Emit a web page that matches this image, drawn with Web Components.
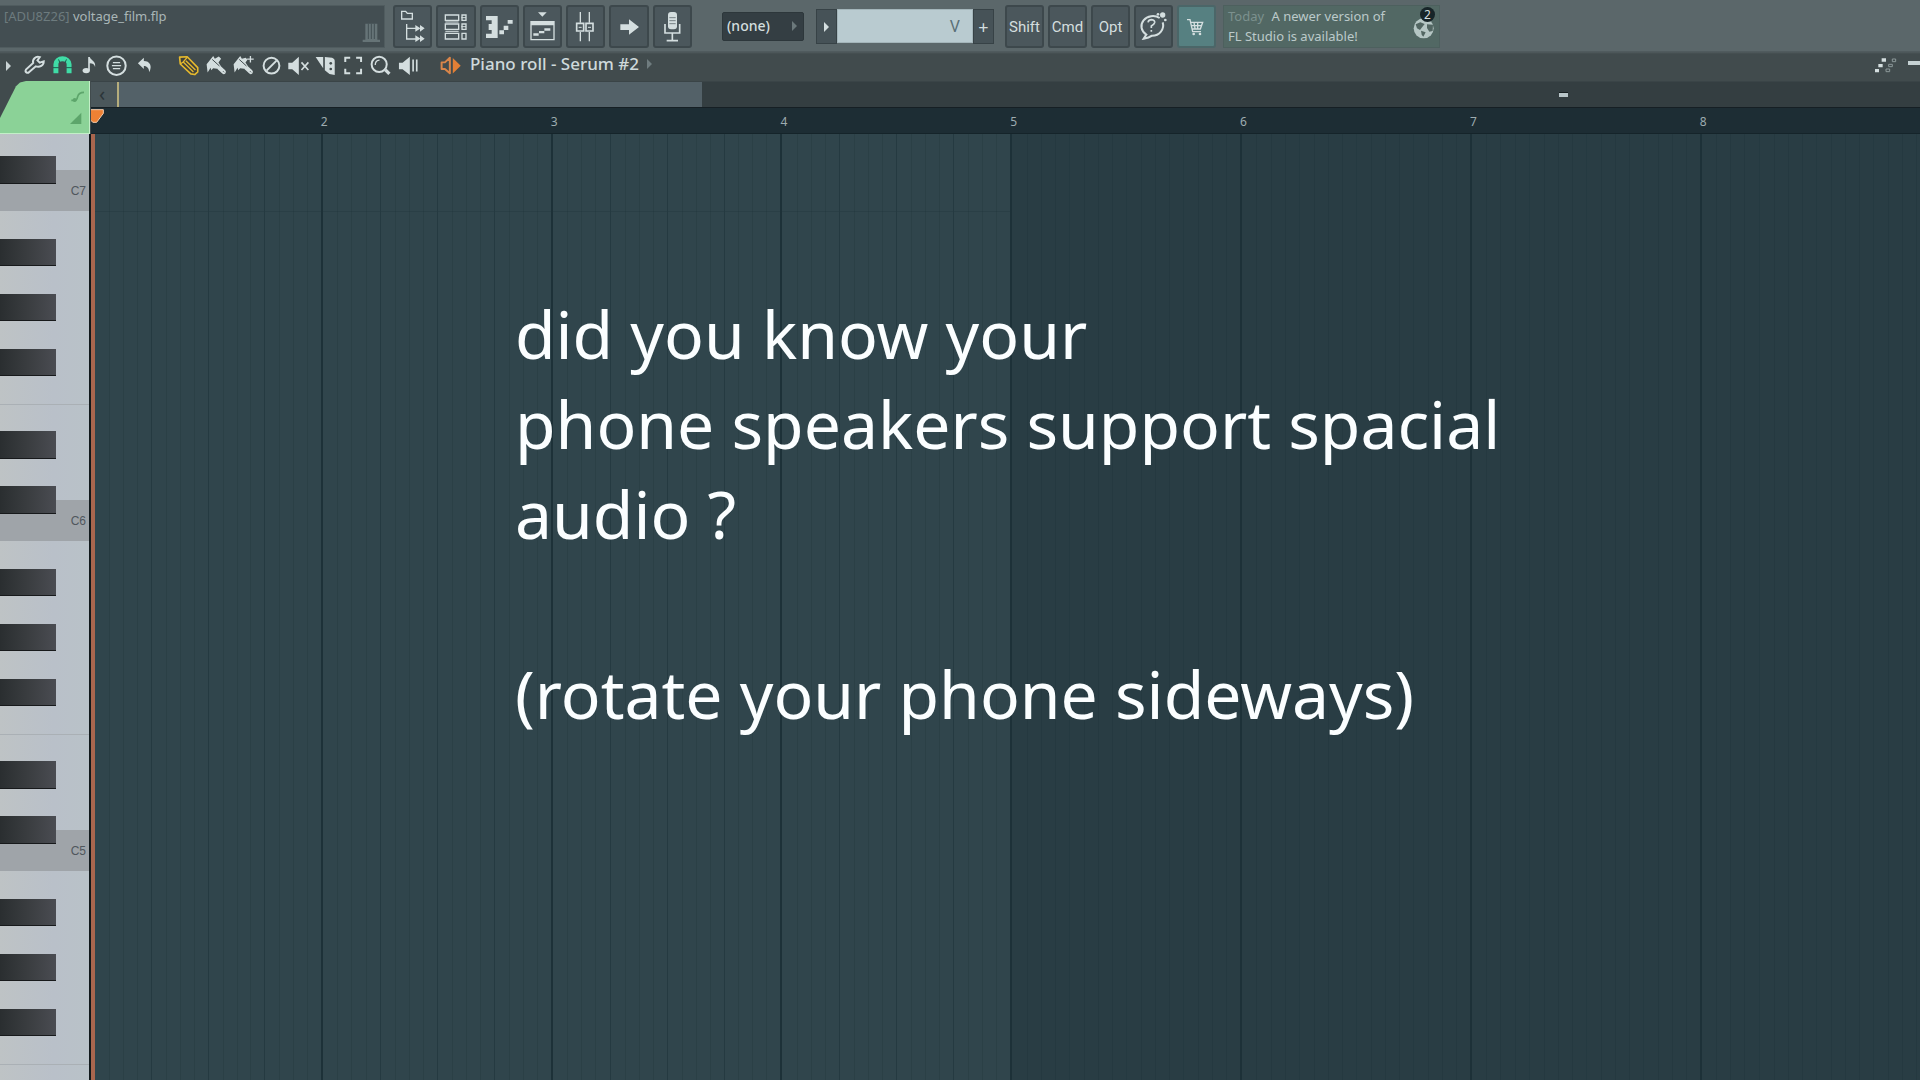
<!DOCTYPE html>
<html lang="en">
<head>
<meta charset="utf-8">
<title>Piano roll</title>
<style>
    body {
        margin: 0;
        height: 100vh;
        overflow: hidden;
        background: #30454c;
        font-family: "Noto Sans", "Open Sans", sans-serif;
    }
</style>
</head>
<body>
<studio-app></studio-app>

<script>
// icons are drawn at three units to the pixel, keyed by name: [viewBox, markup]
const ICONS = {
    browser: ["39 13 117 129", `
        <path class="line" stroke-width="4" d="M65 55V32H77L82 38H97V55Z"/>
        <path class="line" stroke-width="4" d="M80 70V115H112M80 83H110"/>
        <path d="M106 73L120 82V73L134 83L120 93V84L106 93ZM106 104L120 113V104L134 114L120 124V115L106 124Z"/>`],
    rack: ["169 13 117 129", `
        <path class="line" stroke-width="4" d="M197 43H237V59H197ZM197 70H237V86H197ZM197 98H237V115H197ZM247 43H259V59H247ZM247 70H259V86H247ZM247 98H259V115H247Z"/>
        <path class="line" stroke-width="3" d="M197 64H237M197 92H237M245 51H259M245 78H259"/>`],
    roll: ["299 13 117 129", `
        <path d="M317 46H352V112H317V99H334V88H325V70H334V59H317Z"/>
        <path d="M357 89H371V101H357ZM370 75H384V88H370ZM382 58H397V69H382Z"/>`],
    playlist: ["429 13 117 129", `
        <path d="M474 35H500L487 48Z"/>
        <path class="line" stroke-width="4" d="M453 63H522V117H453Z"/>
        <path d="M453 63H522V74H453ZM460 98H476V105H460ZM477 91H493V98H477ZM493 83H511V90H493Z"/>`],
    mixer: ["559 13 117 129", `
        <path class="line" stroke-width="4" d="M602 34V66M629 34V66M602 94V122M629 94V122"/>
        <path class="line" stroke-width="5" d="M591 68H612V91H591ZM619 68H640V91H619Z"/>
        <path class="line" stroke-width="3" d="M597 80H606M625 80H634"/>`],
    arrow: ["689 13 117 129", `<path d="M720 71H746V56L776 79L746 102V88H720Z"/>`],
    mic: ["819 13 117 129", `
        <rect x="864" y="34" width="27" height="52" rx="9"/>
        <path class="line" stroke-width="5" d="M855 70V97H899V70M877 96V121M860 120H894"/>
        <path stroke="#475357" stroke-width="2" d="M868 51H887M868 60H887M868 69H887"/>`],
    help: ["403 13 117 129", `
        <path class="line" stroke-width="6" d="M480 52A34 30 0 1 0 440 102L432 114C446 112 453 108 457 105A33 31 0 0 0 489 65"/>
        <path class="line" stroke-width="5" d="M445 65Q447 57 456 57Q466 58 465 66Q464 71 455 76V82M455 88V93"/>
        <circle cx="489" cy="43" r="8"/><circle cx="475" cy="41" r="4"/><circle cx="497" cy="58" r="4"/>`],
    cart: ["533 13 117 129", `
        <path class="line" stroke-width="4" d="M563 57H572L580 93H605M575 65H610L603 85H579M584 65L587 84M595 65V84M577 75H606"/>
        <circle cx="583" cy="100" r="4"/><circle cx="602" cy="100" r="4"/>`],
    globe: ["1236 13 84 105", `
        <circle cx="1274" cy="80" r="30" fill="#b5c6c4"/>
        <path fill="#526662" d="M1250 68L1264 62L1277 67L1268 78L1263 85L1254 80ZM1266 87L1280 92L1273 105L1268 99ZM1284 68L1302 69L1301 88L1291 90L1284 79Z"/>`],

    wrench: ["64 153 82 90", `<path class="line" stroke-width="6" d="M121 171C108 167 98 178 101 189L79 209C75 216 83 222 89 216L109 199C121 203 133 196 133 184L121 188L114 181Z"/>`],
    magnet: ["147 153 82 90", `
        <path fill="none" stroke="#3fdca6" stroke-width="15" d="M168 220V193A20 17 0 0 1 208 193V220"/>
        <path stroke="#1d5a4d" stroke-width="3" d="M159 203H177M199 203H217M176 178L180 188M200 178L196 188"/>`],
    note: ["229 153 82 90", `
        <ellipse cx="260" cy="212" rx="11" ry="8"/>
        <path d="M266 212V171H271C273 181 290 183 287 201C285 193 279 190 271 190V212Z"/>`],
    options: ["312 153 82 90", `
        <circle class="line" stroke-width="6" cx="353" cy="197" r="28"/>
        <path class="line" stroke-width="4" d="M342 188H364M339 197H367M342 206H364"/>`],
    undo: ["394 153 82 90", `<path d="M415 190L433 173V183C451 183 460 198 449 217C449 205 443 198 433 198V207Z"/>`],
    pencil: ["525 153 82 90", `
        <path fill="#40413a" stroke="#e5b92e" stroke-width="5" stroke-linejoin="round" d="M539 171L562 170L594 203V216L585 224L573 222L541 192Z"/>
        <path fill="none" stroke="#e5b92e" stroke-width="4" d="M541 192L550 186L562 172M550 186L581 216"/>
        <path stroke="#e5b92e" stroke-width="4" d="M558 182L587 210"/>`],
    brush: ["607 153 82 90", `
        <path d="M618 193L638 168L643 176L655 169L662 176L654 187L661 198L650 206L638 205L632 211L630 203L621 218Z"/>
        <path stroke="#d4dedf" stroke-width="13" stroke-linecap="round" d="M656 203L670 216"/>
        <path stroke="#414b4d" stroke-width="3" d="M635 178L657 198M671 217L668 214"/>`],
    paint: ["689 153 82 90", `
        <path d="M700 193L720 168L725 176L737 173L742 179L736 187L743 198L732 206L720 205L714 211L712 203L703 218Z"/>
        <path stroke="#d4dedf" stroke-width="13" stroke-linecap="round" d="M738 203L752 216"/>
        <path stroke="#414b4d" stroke-width="3" d="M717 178L739 198M753 217L750 214"/>
        <path class="line" stroke-width="4" d="M741 177H761M751 168V187"/>`],
    erase: ["771 153 82 90", `
        <circle class="line" stroke-width="6" cx="812" cy="197" r="24"/>
        <path class="line" stroke-width="6" d="M797 212L828 181"/>`],
    mute: ["854 153 82 90", `
        <path d="M864 188H876L896 170V225L876 208H864Z"/>
        <path class="line" stroke-width="5" d="M904 187L925 210M925 187L904 210"/>`],
    slice: ["938 153 82 90", `
        <path d="M949 171H972V205ZM977 171L999 173Q1008 176 1007 186V225L991 222L977 211Z"/>
        <circle cx="995" cy="190" r="4" fill="#414b4d"/><circle cx="995" cy="207" r="4" fill="#414b4d"/>`],
    select: ["1020 153 82 90", `<path class="line" stroke-width="6" d="M1036 186V173H1051M1069 173H1084V186M1084 206V220H1069M1051 220H1036V206"/>`],
    zoom: ["1101 153 82 90", `
        <circle class="line" stroke-width="6" cx="1138" cy="193" r="23"/>
        <path class="line" stroke-width="4" d="M1126 195Q1126 181 1139 180"/>
        <path stroke="#d4dedf" stroke-width="10" d="M1157 210L1169 222"/>`],
    listen: ["1183 153 82 90", `
        <path d="M1195 188H1206L1228 170V225L1206 208H1195Z"/>
        <path class="line" stroke-width="5" d="M1238 178V215M1249 178V215"/>`],
    preview: ["1312 153 82 90", `
        <path fill="none" stroke="#d98549" stroke-width="6" stroke-linejoin="round" d="M1326 187H1336L1351 173V220L1336 207H1326Z"/>
        <path fill="#e27f36" d="M1360 174L1384 197L1360 221Z"/>`],
    ghost: ["1119 80 75 60", `
        <path d="M1142 87H1155V97H1142ZM1132 104H1145V114H1132ZM1122 119H1134V129H1122Z"/>
        <path fill="none" stroke="#8c9899" stroke-width="3" d="M1174 89H1184V97H1174ZM1163 105H1174V112H1163ZM1155 119H1166V127H1155Z"/>`],
    slide: ["212 270 48 42", `<path fill="none" stroke="#5da56b" stroke-width="5" d="M216 304H228Q233 303 235 293Q238 280 254 280"/><circle cx="226" cy="303" r="6" fill="#5da56b"/>`],
    velocity: ["208 336 42 42", `<path fill="#5da56b" d="M211 375L245 341V375Z"/>`],
    marker: ["274 327 42 48", `<path fill="#ee8134" stroke="#f5cdae" stroke-width="3" d="M262 332H311V343L291 370H280L262 354Z"/>`],
    trash: ["1080 65 66 66", `<path fill="#667477" d="M1096 70H1132V118H1140V125H1088V118H1096Z"/><path stroke="#435054" stroke-width="3" d="M1105 70V116M1114 70V116M1123 70V116"/>`]
};

class StudioIcon extends HTMLElement {

    constructor() {
        super();
        this.attachShadow({mode: "open"});
    }

    connectedCallback() {
        const [box, markup] = ICONS[this.getAttribute("name")];
        const [, , w, h] = box.split(" ");
        this.shadowRoot.innerHTML = `
        <style>
            :host {
                display: block;
                flex: none;
            }
            svg {
                display: block;
                fill: #d4dedf;
            }
            .line {
                fill: none;
                stroke: #d4dedf;
            }
        </style>
        <svg width="${Math.round(w / 3)}" height="${Math.round(h / 3)}" viewBox="${box}" aria-hidden="true">${markup}</svg>`;
    }
}

class PanelButton extends HTMLElement {

    constructor() {
        super();
        this.attachShadow({mode: "open"});
    }

    connectedCallback() {
        this.shadowRoot.innerHTML = `
        <style>
            :host {
                display: block;
                min-width: 0;
            }
            button {
                display: flex;
                align-items: center;
                justify-content: center;
                box-sizing: border-box;
                width: 100%;
                height: 43px;
                padding: 0;
                border: 2px solid #3d484c;
                border-radius: 3px;
                background: #4b575c;
                color: #d4dedf;
                font: 15px Roboto, sans-serif;
                overflow: hidden;
            }
            :host([lit]) button {
                background: #568081;
                border-color: #4b6668;
            }
        </style>
        <button type="button" aria-label="${this.getAttribute("label")}"><slot></slot></button>`;
    }
}

class ToolButton extends HTMLElement {

    constructor() {
        super();
        this.attachShadow({mode: "open"});
    }

    connectedCallback() {
        this.shadowRoot.innerHTML = `
        <style>
            :host {
                display: block;
            }
            button {
                display: flex;
                justify-content: center;
                width: 100%;
                height: 30px;
                padding: 0;
                border: 0;
                background: none;
            }
        </style>
        <button type="button" aria-label="${this.getAttribute("name")}"><studio-icon name="${this.getAttribute("name")}"></studio-icon></button>`;
    }
}

class TopBar extends HTMLElement {

    constructor() {
        super();
        this.attachShadow({mode: "open"});
    }

    connectedCallback() {
        this.shadowRoot.innerHTML = `
        <style>
            * {
                box-sizing: border-box;
            }
            :host {
                display: flex;
                align-items: flex-start;
                height: 51px;
                padding-top: 5px;
                box-sizing: border-box;
                background: #5b676a;
                color: #c3cfd0;
            }
            .title {
                display: flex;
                justify-content: space-between;
                width: 385px;
                height: 43px;
                padding: 0 2px 0 4px;
                border: 1px solid #505c5f;
                border-left: 0;
                background: #434e52;
                font-size: 13px;
                line-height: 20px;
                color: #a9b6b7;
            }
            .title i, .news i {
                font-style: normal;
                color: #6d7b7e;
            }
            .title studio-icon {
                margin-top: 16px;
            }
            .windows {
                display: grid;
                grid-template-columns: repeat(7, minmax(0, 1fr));
                gap: 4px;
                width: 299px;
                margin-left: 8px;
            }
            .snap {
                position: relative;
                margin: 7px 0 0 30px;
            }
            select {
                display: block;
                width: 82px;
                height: 29px;
                padding: 0 0 3px 4px;
                border: 1px solid #2d373b;
                border-radius: 2px;
                background: #343e43;
                color: #d4dedf;
                font: 500 14px "Noto Sans", sans-serif;
                appearance: none;
            }
            .snap::after {
                content: "";
                position: absolute;
                right: 7px;
                top: 9px;
                border: 5px solid transparent;
                border-left-color: #6b787b;
                border-right: 0;
            }
            .pattern {
                display: flex;
                width: 178px;
                margin: 4px 0 0 12px;
            }
            .pattern button {
                width: 21px;
                height: 35px;
                padding: 0;
                border: 1px solid #374246;
                background: #465257;
                color: #d4dedf;
                font: 18px "Noto Sans", sans-serif;
                line-height: 30px;
            }
            .pattern .play {
                display: flex;
                align-items: center;
                justify-content: center;
            }
            .play::before {
                content: "";
                border: 5px solid transparent;
                border-left-color: #d4dedf;
                border-right: 0;
            }
            .pattern input {
                flex: 1;
                min-width: 0;
                height: 34px;
                padding: 0 12px 0 0;
                border: 1px solid #a4b5ba;
                background: #b9cbd0;
                color: #5b7077;
                font: 16px Roboto, sans-serif;
                text-align: right;
            }
            .keys {
                display: grid;
                grid-template-columns: repeat(5, minmax(0, 1fr));
                gap: 4px;
                width: 211px;
                margin-left: 11px;
            }
            .news {
                display: flex;
                justify-content: space-between;
                width: 217px;
                height: 43px;
                margin-left: 7px;
                border: 1px solid #4d605e;
                padding-left: 4px;
                background: #526864;
                font-size: 13px;
                line-height: 20px;
                color: #bccaca;
            }
            .news p {
                margin: 0;
            }
            .news i {
                color: #7c918e;
                margin-right: 4px;
            }
            .globe {
                position: relative;
            }
            .badge {
                position: absolute;
                right: 4px;
                top: 1px;
                width: 15px;
                height: 15px;
                border-radius: 50%;
                background: #172528;
                color: #d4dedf;
                font-size: 12px;
                line-height: 15px;
                text-align: center;
            }
        </style>
        <div class="title">
            <span><i>[ADU8Z26]</i> voltage_film.flp</span>
            <studio-icon name="trash"></studio-icon>
        </div>
        <div class="windows">
            ${["browser", "rack", "roll", "playlist", "mixer", "arrow", "mic"].map(name => `
            <panel-button label="${name}"><studio-icon name="${name}"></studio-icon></panel-button>`).join("")}
        </div>
        <div class="snap">
            <select aria-label="Snap"><option>(none)</option></select>
        </div>
        <div class="pattern">
            <button class="play" type="button" aria-label="Patterns"></button>
            <input aria-label="Pattern" value="V">
            <button type="button" aria-label="Add pattern">+</button>
        </div>
        <div class="keys">
            <panel-button label="Shift">Shift</panel-button>
            <panel-button label="Cmd">Cmd</panel-button>
            <panel-button label="Opt">Opt</panel-button>
            <panel-button label="Help"><studio-icon name="help"></studio-icon></panel-button>
            <panel-button label="Shop" lit><studio-icon name="cart"></studio-icon></panel-button>
        </div>
        <div class="news">
            <p><i>Today</i> A newer version of<br>FL Studio is available!</p>
            <div class="globe"><studio-icon name="globe"></studio-icon><span class="badge">2</span></div>
        </div>`;
    }
}

class ToolBar extends HTMLElement {

    constructor() {
        super();
        this.attachShadow({mode: "open"});
    }

    connectedCallback() {
        const tools = names => names.map(name => `<tool-button name="${name}"></tool-button>`).join("");
        this.shadowRoot.innerHTML = `
        <style>
            :host {
                display: flex;
                align-items: center;
                height: 30px;
                background: linear-gradient(#505b5e 1px, #414b4d 3px);
                color: #ced9db;
            }
            .menu {
                width: 5px;
                height: 10px;
                margin: 0 10px 0 6px;
                background: #c9d3d4;
                clip-path: polygon(0 0, 100% 50%, 0 100%);
            }
            .group {
                display: grid;
                grid-auto-flow: column;
                grid-auto-columns: 1fr;
            }
            .edit {
                width: 137px;
            }
            .draw {
                width: 247px;
                margin-left: 17px;
            }
            .target {
                display: flex;
                align-items: center;
                gap: 8px;
                margin-left: 6px;
                padding: 0 0 4px;
                border: 0;
                background: none;
                color: inherit;
                font: 500 17px "Noto Sans", sans-serif;
                line-height: 24px;
            }
            .target::after {
                content: "";
                border: 5px solid transparent;
                border-left-color: #6f7c7f;
                border-right: 0;
            }
            .preview {
                width: 27px;
                margin-left: 15px;
            }
            .right {
                display: flex;
                align-items: center;
                gap: 9px;
                margin-left: auto;
            }
            .min {
                width: 12px;
                height: 4px;
                margin-bottom: 6px;
                background: #c5d1d3;
            }
        </style>
        <div class="menu"></div>
        <div class="group edit">${tools(["wrench", "magnet", "note", "options", "undo"])}</div>
        <div class="group draw">${tools(["pencil", "brush", "paint", "erase", "mute", "slice", "select", "zoom", "listen"])}</div>
        <tool-button class="preview" name="preview"></tool-button>
        <button class="target" type="button">Piano roll - Serum #2</button>
        <div class="right"><studio-icon name="ghost"></studio-icon><div class="min"></div></div>`;
    }
}

class PianoOctave extends HTMLElement {

    constructor() {
        super();
        this.attachShadow({mode: "open"});
    }

    connectedCallback() {
        // 24 half rows from B at the top down to C
        const blacks = [3, 7, 11, 17, 21];
        this.shadowRoot.innerHTML = `
        <style>
            :host {
                display: grid;
                flex: none;
                grid-template: repeat(24, 1fr) / 56px 1fr;
                height: 330px;
                background: linear-gradient(90deg, #bec3c5, #b9c0c9 60%, #b9c2c8);
            }
            .black {
                grid-column: 1;
                background: linear-gradient(90deg, #2a2e30, #3a3d40 50%, #4a4c52);
                border-bottom: 1px solid #17191b;
                z-index: 1;
            }
            .c {
                grid-area: 22 / 1 / 25 / 3;
                padding-right: 3px;
                background: #9fa4a9;
                color: #50575d;
                font: 12px/42px "Liberation Sans", sans-serif;
                text-align: right;
            }
            .f {
                grid-area: 15 / 1 / 16 / 3;
                border-top: 1px solid #aab0b5;
            }
        </style>
        ${blacks.map(row => `<div class="black" style="grid-row: ${row} / span 2"></div>`).join("")}
        <div class="f"></div>
        <div class="c">${this.getAttribute("note") || ""}</div>`;
    }
}

class PianoKeys extends HTMLElement {

    constructor() {
        super();
        this.attachShadow({mode: "open"});
    }

    connectedCallback() {
        this.shadowRoot.innerHTML = `
        <style>
            :host {
                display: block;
                overflow: hidden;
                border-right: 2px solid #11191c;
            }
            .top {
                display: flex;
                flex-direction: column;
                justify-content: flex-end;
                height: 77px;
                overflow: hidden;
            }
        </style>
        <div class="top"><piano-octave note="C7"></piano-octave></div>
        <piano-octave note="C6"></piano-octave>
        <piano-octave note="C5"></piano-octave>
        <piano-octave></piano-octave>`;
    }
}

class TimeRuler extends HTMLElement {

    constructor() {
        super();
        this.attachShadow({mode: "open"});
    }

    connectedCallback() {
        this.shadowRoot.innerHTML = `
        <style>
            :host {
                display: block;
                position: relative;
                overflow: hidden;
                background: #1d2d34;
                border-top: 1px solid #161f24;
                border-bottom: 1px solid #15242a;
                box-sizing: border-box;
            }
            .bars {
                display: grid;
                grid-template-columns: repeat(8, 1fr);
                width: calc(100% * 192 / 191);
                font: 12px/28px "Noto Sans", sans-serif;
                color: #9eacb0;
            }
            studio-icon {
                position: absolute;
                left: 0;
                top: 0;
            }
        </style>
        <div class="bars"><span></span>${[2, 3, 4, 5, 6, 7, 8].map(n => `<span>${n}</span>`).join("")}</div>
        <studio-icon name="marker"></studio-icon>`;
    }
}

class NoteGrid extends HTMLElement {

    constructor() {
        super();
        this.attachShadow({mode: "open"});
    }

    connectedCallback() {
        this.shadowRoot.innerHTML = `
        <style>
            :host {
                display: grid;
                overflow: hidden;
                background: #30454c;
            }
            .bars, .text {
                grid-area: 1 / 1;
                min-width: 0;
            }
            .bars {
                display: grid;
                grid-template-columns: repeat(8, 1fr);
                width: calc(100% * 192 / 191);
                background: linear-gradient(#2a3f46, #2a3f46) 0 77px / 100% 1px no-repeat;
            }
            .bar {
                display: grid;
                grid-template-columns: repeat(4, 1fr);
                border-left: 2px solid #1d3138;
            }
            .bar:nth-child(n+5) {
                background: #293d44;
            }
            .bar:first-child {
                border-left: 4px solid #a9664e;
            }
            .beat {
                display: grid;
                grid-template-columns: repeat(4, 1fr);
            }
            .beat + .beat {
                border-left: 1px solid #253a41;
            }
            .step + .step {
                border-left: 1px solid rgba(24, 44, 51, 0.2);
            }
            .text {
                z-index: 1;
            }
        </style>
        <div class="bars">
            ${`<div class="bar">${`<div class="beat">${`<div class="step"></div>`.repeat(4)}</div>`.repeat(4)}</div>`.repeat(8)}
        </div>
        <div class="text"><slot></slot></div>`;
    }
}

class VideoCaption extends HTMLElement {

    constructor() {
        super();
        this.attachShadow({mode: "open"});
    }

    connectedCallback() {
        this.shadowRoot.innerHTML = `
        <style>
            :host {
                display: block;
                padding: 154px 0 0 424px;
                color: #fbfeff;
                font: 66px/90px "Noto Sans", "Open Sans", sans-serif;
            }
            p {
                margin: 0;
                white-space: pre-line;
            }
        </style>
        <p><slot></slot></p>`;
    }
}

class PianoRoll extends HTMLElement {

    constructor() {
        super();
        this.attachShadow({mode: "open"});
    }

    connectedCallback() {
        this.shadowRoot.innerHTML = `
        <style>
            :host {
                display: grid;
                grid-template: 26px 27px 1fr / 91px 1fr;
                min-height: 0;
                background: #414b4d;
            }
            .corner {
                grid-row: 1 / 3;
                display: flex;
                flex-direction: column;
                align-items: flex-end;
                justify-content: space-between;
                margin-right: 1px;
                padding: 8px 3px 8px 0;
                border-right: 1px solid #c3efc7;
                border-bottom: 1px solid #c3efc7;
                background: #8bd297;
                clip-path: polygon(0 70%, 16px 10%, 20px 3%, 26px 0, 100% 0, 100% 100%, 0 100%);
            }
            .corner [name="velocity"] {
                margin-right: 3px;
            }
            .scroll {
                display: flex;
                align-items: center;
                background: #343e41;
                border-top: 1px solid #3a4447;
            }
            .scroll button {
                width: 26px;
                height: 25px;
                padding: 0 4px 2px 0;
                border: 0;
                background: #4b575b;
                color: #2b3539;
                font: 20px "Noto Sans", sans-serif;
                line-height: 20px;
            }
            .thumb {
                flex: 0 0 32%;
                height: 25px;
                box-sizing: border-box;
                border-left: 2px solid #b5ad7c;
                background: #536168;
            }
            .min {
                width: 9px;
                height: 4px;
                margin: 0 352px 0 auto;
                background: #b9c6c9;
                border-top: 1px solid #171f21;
            }
            piano-keys, note-grid {
                min-height: 0;
            }
        </style>
        <div class="corner"><studio-icon name="slide"></studio-icon><studio-icon name="velocity"></studio-icon></div>
        <div class="scroll">
            <button type="button" aria-label="Scroll left">&lsaquo;</button>
            <div class="thumb"></div>
            <div class="min"></div>
        </div>
        <time-ruler></time-ruler>
        <piano-keys></piano-keys>
        <note-grid><slot></slot></note-grid>`;
    }
}

class StudioApp extends HTMLElement {

    constructor() {
        super();
        this.attachShadow({mode: "open"});
    }

    connectedCallback() {
        this.shadowRoot.innerHTML = `
        <style>
            :host {
                display: grid;
                grid-template-rows: auto auto 1fr;
                height: 100%;
            }
        </style>
        <top-bar></top-bar>
        <tool-bar></tool-bar>
        <piano-roll><video-caption>did you know your
phone speakers support spacial
audio ?

(rotate your phone sideways)</video-caption></piano-roll>`;
    }
}

customElements.define("studio-icon", StudioIcon);
customElements.define("panel-button", PanelButton);
customElements.define("tool-button", ToolButton);
customElements.define("top-bar", TopBar);
customElements.define("tool-bar", ToolBar);
customElements.define("piano-octave", PianoOctave);
customElements.define("piano-keys", PianoKeys);
customElements.define("time-ruler", TimeRuler);
customElements.define("note-grid", NoteGrid);
customElements.define("video-caption", VideoCaption);
customElements.define("piano-roll", PianoRoll);
customElements.define("studio-app", StudioApp);
</script>
</body>
</html>
